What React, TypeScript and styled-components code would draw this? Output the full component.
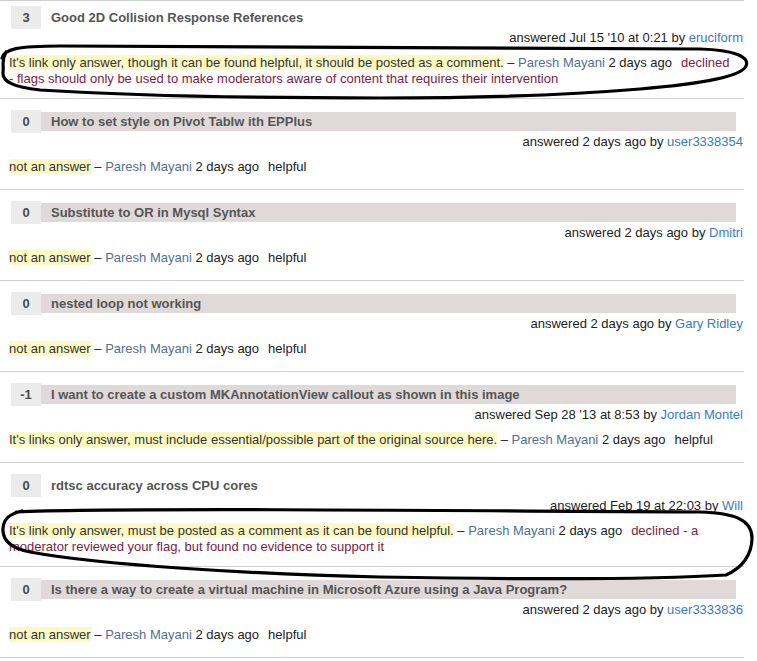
import React from "react";
import styled, { createGlobalStyle } from "styled-components";

const GlobalStyle = createGlobalStyle`
  html, body {
    margin: 0;
    padding: 0;
    background: #ffffff;
    overflow: hidden;
  }
  body {
    font-family: "Liberation Sans", Arial, sans-serif;
    font-size: 13px;
    color: #222222;
  }
`;

const Page = styled.div`
  position: relative;
  width: 757px;
  height: 661px;
  overflow: hidden;
`;

const List = styled.div`
  width: 744px;
  border-top: 1px solid #cfcfcf;
`;

const Item = styled.div<{ $twoLine: boolean }>`
  padding: 11px 0 ${(p) => (p.$twoLine ? "11px" : "14px")} 0;
  border-bottom: 1px solid #cfcfcf;
  &:first-child {
    padding-top: 5px;
  }
`;

const Header = styled.div`
  display: flex;
  align-items: center;
  padding: 0 8px 0 11px;
  height: 23px;
`;

const VoteBox = styled.div`
  width: 30px;
  height: 23px;
  flex: none;
  background: #ebebeb;
  color: #4a4a4a;
  font-weight: bold;
  font-size: 13px;
  display: flex;
  align-items: center;
  justify-content: center;
`;

const Title = styled.div<{ $shaded: boolean }>`
  flex: 1;
  height: 19px;
  line-height: 19px;
  padding-left: 10px;
  background: ${(p) => (p.$shaded ? "#e0d9d9" : "transparent")};
  color: #555555;
  font-weight: bold;
  font-size: 13px;
  white-space: nowrap;
  overflow: hidden;
`;

const Answered = styled.div`
  margin-top: 1px;
  line-height: 16px;
  text-align: right;
  padding-right: 1px;
  color: #222222;
`;

const UserLink = styled.a`
  color: #3b7bbf;
  text-decoration: none;
`;

const Flag = styled.div`
  margin-top: 9px;
  padding: 0 11px 0 9px;
  line-height: 16px;
  color: #222222;
`;

const Reason = styled.span`
  background: #fdf9c3;
  color: #333333;
`;

const Author = styled.a`
  color: #52708f;
  text-decoration: none;
`;

const Status = styled.span<{ $declined: boolean }>`
  margin-left: 9px;
  color: ${(p) => (p.$declined ? "#7a1d45" : "#222222")};
`;

const Scribble = styled.svg`
  position: absolute;
  left: 0;
  top: 0;
  width: 757px;
  height: 661px;
  pointer-events: none;
`;

type Entry = {
  votes: string;
  title: string;
  shaded: boolean;
  answered: string;
  user: string;
  reason: string;
  status: string;
  declined: boolean;
};

const entries: Entry[] = [
  {
    votes: "3",
    title: "Good 2D Collision Response References",
    shaded: false,
    answered: "answered Jul 15 '10 at 0:21 by",
    user: "eruciform",
    reason:
      "It's link only answer, though it can be found helpful, it should be posted as a comment.",
    status:
      "declined - flags should only be used to make moderators aware of content that requires their intervention",
    declined: true,
  },
  {
    votes: "0",
    title: "How to set style on Pivot Tablw ith EPPlus",
    shaded: true,
    answered: "answered 2 days ago by",
    user: "user3338354",
    reason: "not an answer",
    status: "helpful",
    declined: false,
  },
  {
    votes: "0",
    title: "Substitute to OR in Mysql Syntax",
    shaded: true,
    answered: "answered 2 days ago by",
    user: "Dmitri",
    reason: "not an answer",
    status: "helpful",
    declined: false,
  },
  {
    votes: "0",
    title: "nested loop not working",
    shaded: true,
    answered: "answered 2 days ago by",
    user: "Gary Ridley",
    reason: "not an answer",
    status: "helpful",
    declined: false,
  },
  {
    votes: "-1",
    title: "I want to create a custom MKAnnotationView callout as shown in this image",
    shaded: true,
    answered: "answered Sep 28 '13 at 8:53 by",
    user: "Jordan Montel",
    reason:
      "It's links only answer, must include essential/possible part of the original source here.",
    status: "helpful",
    declined: false,
  },
  {
    votes: "0",
    title: "rdtsc accuracy across CPU cores",
    shaded: false,
    answered: "answered Feb 19 at 22:03 by",
    user: "Will",
    reason:
      "It's link only answer, must be posted as a comment as it can be found helpful.",
    status:
      "declined - a moderator reviewed your flag, but found no evidence to support it",
    declined: true,
  },
  {
    votes: "0",
    title:
      "Is there a way to create a virtual machine in Microsoft Azure using a Java Program?",
    shaded: true,
    answered: "answered 2 days ago by",
    user: "user3333836",
    reason: "not an answer",
    status: "helpful",
    declined: false,
  },
];

export default function App() {
  return (
    <>
      <GlobalStyle />
      <Page>
        <List>
          {entries.map((e, i) => (
            <Item key={i} $twoLine={e.declined}>
              <Header>
                <VoteBox>{e.votes}</VoteBox>
                <Title $shaded={e.shaded}>{e.title}</Title>
              </Header>
              <Answered>
                {e.answered} <UserLink href="#">{e.user}</UserLink>
              </Answered>
              <Flag>
                <Reason>{e.reason}</Reason> – <Author href="#">Paresh Mayani</Author> 2 days ago
                <Status $declined={e.declined}>{e.status}</Status>
              </Flag>
            </Item>
          ))}
        </List>
        <Scribble viewBox="0 0 757 661">
          <path
            d="M 2 58 C 4 49, 18 46, 60 46 L 700 49 C 735 50, 750 57, 746 66 C 742 76, 702 84, 640 89 C 580 94, 500 98, 380 98 C 250 98, 120 95, 40 90 C 14 87, 2 82, 3 72 C 4 64, 1 61, 6 52"
            fill="none"
            stroke="#000"
            strokeWidth={3.2}
            strokeLinecap="round"
            strokeLinejoin="round"
          />
          <path
            d="M 16 512 C 100 508, 400 510, 700 512 C 735 513, 752 520, 752 538 C 752 555, 742 568, 726 575 C 650 580, 500 579, 380 577 C 250 574, 100 565, 30 552 C 10 548, 2 540, 3 528 C 4 518, 10 514, 22 511"
            fill="none"
            stroke="#000"
            strokeWidth={3.2}
            strokeLinecap="round"
            strokeLinejoin="round"
          />
        </Scribble>
      </Page>
    </>
  );
}
